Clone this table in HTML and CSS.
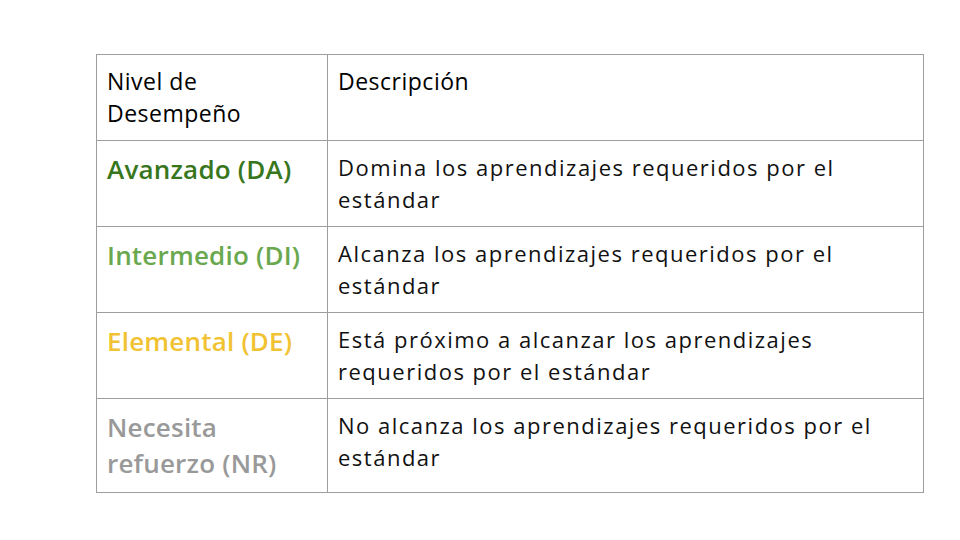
FILE: index.html
```html
<!DOCTYPE html>
<html lang="es">
<head>
<meta charset="utf-8">
<link rel="stylesheet" href="styles.css">
</head>
<body>
<div class="slide">
  <table class="levels">
    <tr>
      <th class="col-level">Nivel de Desempeño</th>
      <th class="col-desc">Descripción</th>
    </tr>
    <tr>
      <td class="level level-da">Avanzado (DA)</td>
      <td class="desc">Domina los aprendizajes requeridos por el estándar</td>
    </tr>
    <tr>
      <td class="level level-di">Intermedio (DI)</td>
      <td class="desc">Alcanza los aprendizajes requeridos por el estándar</td>
    </tr>
    <tr>
      <td class="level level-de">Elemental (DE)</td>
      <td class="desc">Está próximo a alcanzar los aprendizajes requeridos por el estándar</td>
    </tr>
    <tr>
      <td class="level level-nr">Necesita refuerzo (NR)</td>
      <td class="desc">No alcanza los aprendizajes requeridos por el estándar</td>
    </tr>
  </table>
</div>
</body>
</html>
```
FILE: styles.css
```css
html, body {
  margin: 0;
  padding: 0;
  background: #ffffff;
}
.slide {
  width: 960px;
  height: 540px;
  padding: 54px 0 0 96px;
  box-sizing: border-box;
}
.levels {
  border-collapse: collapse;
  width: 828px;
  table-layout: fixed;
}
.levels th,
.levels td {
  border: 1px solid #9e9e9e;
  padding: 10px 10px 11px 10px;
  vertical-align: top;
  text-align: left;
}
.col-level { width: 210px; }
.levels th {
  font-family: "Open Sans", sans-serif;
  font-weight: 500;
  font-size: 23px;
  line-height: 32px;
  letter-spacing: 0.5px;
  color: #000000;
}
.level {
  font-family: "Open Sans", sans-serif;
  font-weight: 600;
  font-size: 26px;
  line-height: 36px;
  letter-spacing: 0.2px;
}
.desc {
  font-family: "Open Sans", sans-serif;
  font-weight: 400;
  font-size: 22px;
  line-height: 32px;
  letter-spacing: 1.5px;
  color: #111111;
}
.level-da { color: #38761d; }
.level-di { color: #6aa84f; }
.level-de { color: #f1c232; }
.level-nr { color: #999999; }
```
